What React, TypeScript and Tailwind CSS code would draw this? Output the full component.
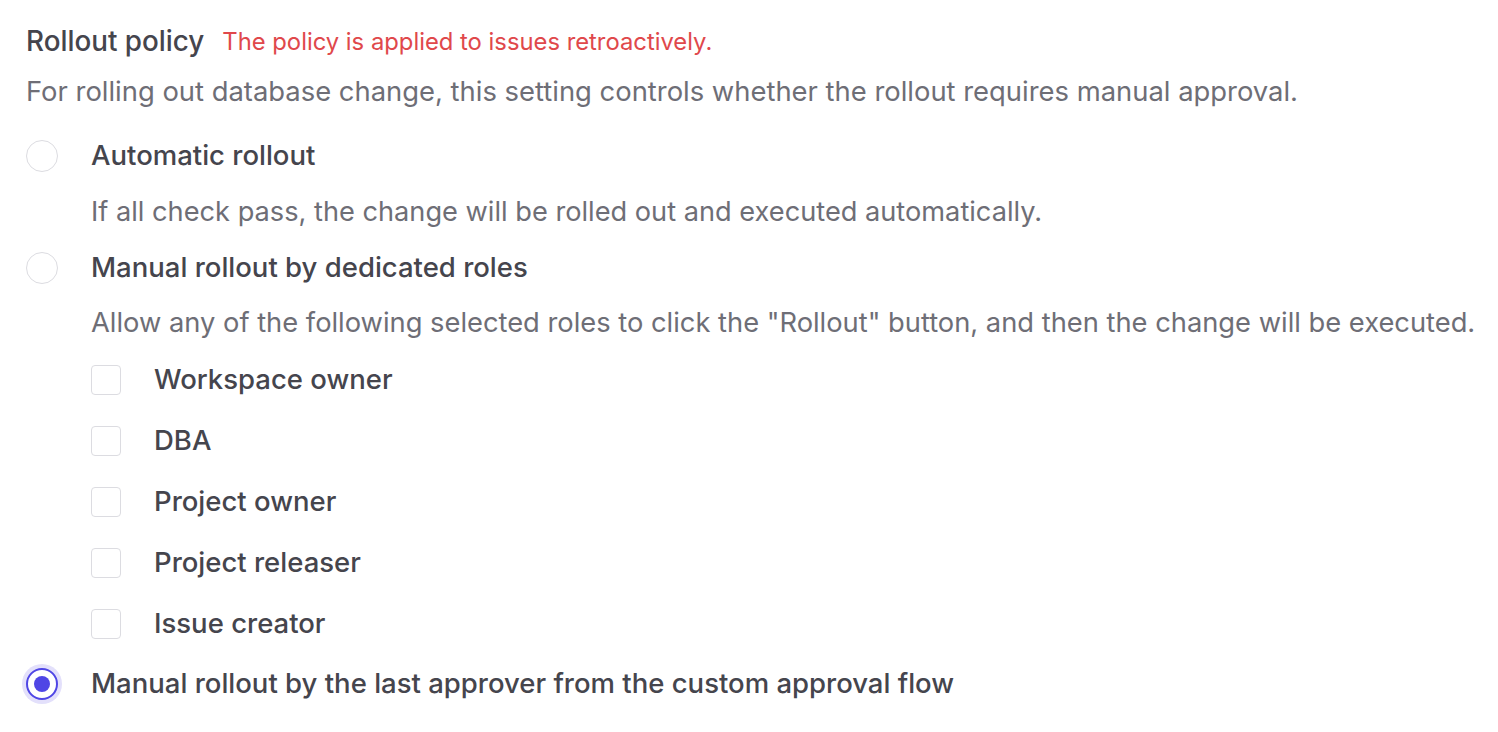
import React, { useState } from 'react';

const roles = ['Workspace owner', 'DBA', 'Project owner', 'Project releaser', 'Issue creator'];

function Radio({ checked }: { checked: boolean }) {
  if (checked) {
    return (
      <span className="flex h-[32px] w-[32px] shrink-0 items-center justify-center rounded-full border-2 border-[#4f46e5] bg-white shadow-[0_0_0_4px_#e3e0fb]">
        <span className="h-[16px] w-[16px] rounded-full bg-[#4f46e5]" />
      </span>
    );
  }
  return <span className="h-[32px] w-[32px] shrink-0 rounded-full border-[1.5px] border-[#dcdce1] bg-white" />;
}

function Checkbox({ checked }: { checked: boolean }) {
  return (
    <span
      className={
        checked
          ? 'h-[30px] w-[30px] shrink-0 rounded-[4px] border-[1.5px] border-[#4f46e5] bg-[#4f46e5]'
          : 'h-[30px] w-[30px] shrink-0 rounded-[4px] border-[1.5px] border-[#dcdce1] bg-white'
      }
    />
  );
}

export default function App() {
  const [policy, setPolicy] = useState('last-approver');
  const [selectedRoles, setSelectedRoles] = useState<string[]>([]);

  const toggleRole = (role: string) => {
    setSelectedRoles((prev) => (prev.includes(role) ? prev.filter((r) => r !== role) : [...prev, role]));
  };

  return (
    <div className="min-h-screen bg-white pl-[26px] pt-[24px] font-['Inter',sans-serif] text-[#45454d]">
      <div className="flex h-[36px] items-center gap-[18px]">
        <h2 className="text-[27.8px] font-medium">Rollout policy</h2>
        <span className="text-[23.8px] text-[#e0484b]">The policy is applied to issues retroactively.</span>
      </div>
      <p className="mt-[13px] h-[36px] whitespace-nowrap text-[27.4px] leading-[36px] text-[#6e6e76]">
        For rolling out database change, this setting controls whether the rollout requires manual approval.
      </p>

      <div className="mt-[27px] flex flex-col">
        <label className="flex h-[40px] cursor-pointer items-center gap-[33px]" onClick={() => setPolicy('automatic')}>
          <Radio checked={policy === 'automatic'} />
          <span className="text-[27.5px] font-medium">Automatic rollout</span>
        </label>
        <p className="mt-[18px] h-[36px] whitespace-nowrap pl-[65px] text-[27.2px] leading-[36px] text-[#6e6e76]">
          If all check pass, the change will be rolled out and executed automatically.
        </p>

        <label className="mt-[18px] flex h-[40px] cursor-pointer items-center gap-[33px]" onClick={() => setPolicy('roles')}>
          <Radio checked={policy === 'roles'} />
          <span className="text-[27.5px] font-medium">Manual rollout by dedicated roles</span>
        </label>
        <p className="mt-[17px] h-[36px] whitespace-nowrap pl-[65px] text-[27.3px] leading-[36px] text-[#6e6e76]">
          Allow any of the following selected roles to click the "Rollout" button, and then the change will be executed.
        </p>

        <div className="mt-[19px] flex flex-col gap-[21px] pl-[65px]">
          {roles.map((role) => (
            <label key={role} className="flex h-[40px] cursor-pointer items-center gap-[33px]" onClick={() => toggleRole(role)}>
              <Checkbox checked={selectedRoles.includes(role)} />
              <span className="text-[27.5px] font-medium">{role}</span>
            </label>
          ))}
        </div>

        <label className="mt-[20px] flex h-[40px] cursor-pointer items-center gap-[33px]" onClick={() => setPolicy('last-approver')}>
          <Radio checked={policy === 'last-approver'} />
          <span className="whitespace-nowrap text-[27.5px] font-medium">Manual rollout by the last approver from the custom approval flow</span>
        </label>
      </div>
    </div>
  );
}
